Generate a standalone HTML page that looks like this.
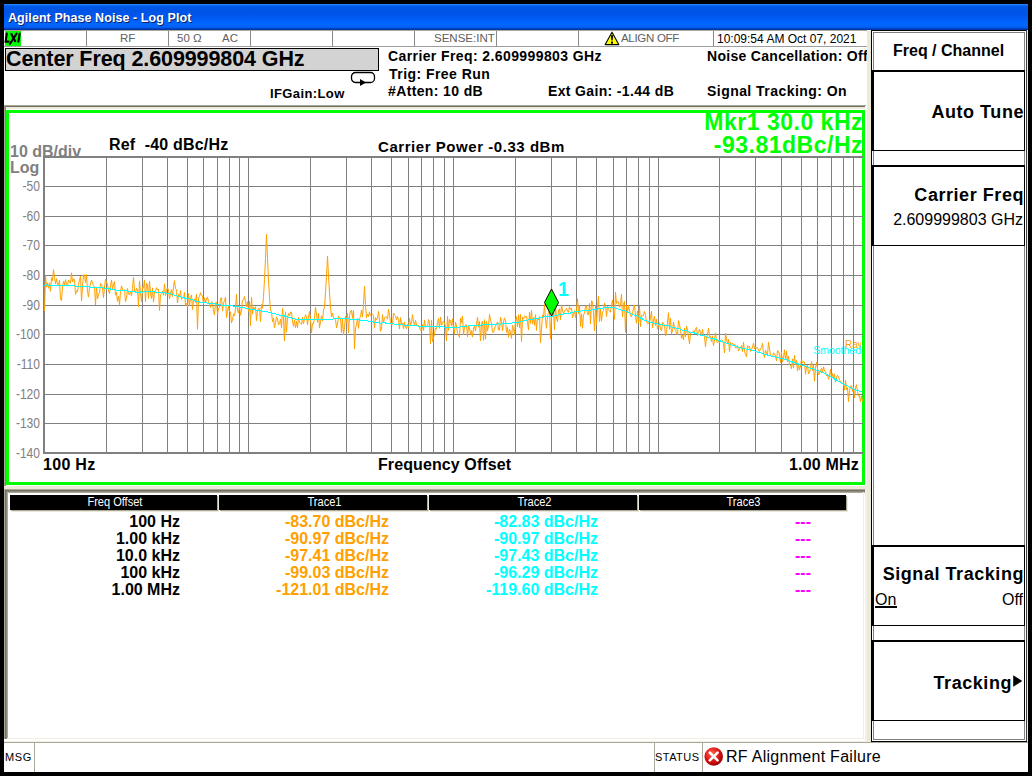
<!DOCTYPE html>
<html><head><meta charset="utf-8">
<style>
*{margin:0;padding:0;box-sizing:border-box}
html,body{width:1032px;height:776px;overflow:hidden;background:#000}
body{position:relative;font-family:"Liberation Sans",sans-serif;color:#000}
.a{position:absolute}
.t{position:absolute;white-space:nowrap;line-height:1}
#title{left:4px;top:4px;width:1024px;height:26px;
 background:linear-gradient(to bottom,#3d95ff 0px,#0a6af5 1px,#0058e6 3px,#0054e3 6px,#0055eb 11px,#005ff7 16px,#0066ff 20px,#0062f5 23px,#0050e0 24px,#003cb0 25px,#003092 26px)}
#title .t{left:4px;top:8px;color:#fff;font-size:12.5px;letter-spacing:0.07px;font-weight:bold;text-shadow:1px 1px 0 #0a1e6e}
#main{left:4px;top:30px;width:1024px;height:742px;background:#fff}
.sep{position:absolute;background:#8a8a8a}
.st{font-size:11.5px;color:#606060}
.bold{font-weight:bold}
.yl{position:absolute;left:9px;width:31px;text-align:right;font-size:14px;color:#808080;line-height:16px;transform:scaleX(0.86);transform-origin:right center}
.hdr span{position:relative;top:0px;left:1px}
.hdr{position:absolute;top:495px;height:15px;background:#000;color:#fff;font-size:12px;line-height:15px;text-align:center;
 box-shadow:1px 1px 0 #aca899, 2px 2px 0 #ece9d8}
.row{position:absolute;font-size:16px;font-weight:bold;line-height:17px;white-space:nowrap;text-align:right}
.key{position:absolute;left:871px;width:154px;height:81px;border-left:3px solid #000;border-top:2px solid #000;border-right:1px solid #000;border-bottom:1px solid #000;background:#fff}
.kt{position:absolute;right:0px;font-size:18px;font-weight:bold;white-space:nowrap;line-height:1;letter-spacing:0.55px}
</style></head><body>
<div id="title" class="a"><div class="t">Agilent Phase Noise - Log Plot</div></div>
<div id="main" class="a"></div>

<!-- status row -->
<div class="a" style="left:4px;top:30px;width:863px;height:1px;background:#aca899"></div>
<div class="a" style="left:4px;top:46px;width:863px;height:1px;background:#9d9d9d"></div>
<div class="a" style="left:5px;top:31px;width:16px;height:15px;background:#00ff00"></div>
<svg class="a" style="left:0;top:28px" width="24" height="20" viewBox="0 28 24 20"><g stroke="#000" stroke-width="2.1" fill="none" stroke-linecap="round"><path d="M6.8 33.6 L5.6 41.6 L8.6 41.6"/><path d="M16.6 33.6 L10 43.8"/><path d="M11.4 34 L15.2 41.2"/><path d="M19.7 33.6 L18.3 41.8"/></g></svg>
<div class="sep" style="left:86px;top:31px;width:1px;height:15px"></div><div class="sep" style="left:168px;top:31px;width:1px;height:15px"></div><div class="sep" style="left:250px;top:31px;width:1px;height:15px"></div><div class="sep" style="left:332px;top:31px;width:1px;height:15px"></div><div class="sep" style="left:414px;top:31px;width:1px;height:15px"></div><div class="sep" style="left:496px;top:31px;width:1px;height:15px"></div><div class="sep" style="left:578px;top:31px;width:1px;height:15px"></div><div class="sep" style="left:713px;top:31px;width:1px;height:15px"></div>
<div class="t st" style="left:120px;top:33px">RF</div>
<div class="t st" style="left:177px;top:33px">50 &#937;</div>
<div class="t st" style="left:222px;top:33px">AC</div>
<div class="t st" style="left:434px;top:33px">SENSE:INT</div>
<div class="t st" style="left:621px;top:33px;letter-spacing:-0.3px">ALIGN OFF</div>
<svg class="a" style="left:604px;top:31px" width="16" height="15" viewBox="0 0 16 15"><path d="M8 1.2 L14.8 13.6 L1.2 13.6 Z" fill="#ffff00" stroke="#000" stroke-width="1.1" stroke-linejoin="round"/><path d="M6.9 4.2 L9.1 4.2 L8.6 9.6 L7.4 9.6 Z" fill="#000"/><rect x="7" y="10.6" width="2" height="2" fill="#000"/></svg>
<div class="t" style="left:717px;top:33px;font-size:12px;color:#000">10:09:54 AM Oct 07, 2021</div>

<!-- beige strip between main and softkeys -->
<div class="a" style="left:867px;top:31px;width:4px;height:711px;background:#ece9d8"></div>

<!-- center freq box -->
<div class="a" style="left:5px;top:48px;width:374px;height:23px;border:1px solid #000;background:#d3d3d3"></div>
<div class="t bold" style="left:6px;top:49px;font-size:21.5px;letter-spacing:-0.1px">Center Freq 2.609999804 GHz</div>
<svg class="a" style="left:350px;top:71px" width="26" height="16" viewBox="0 0 26 16"><rect x="1.5" y="1.5" width="23" height="10" rx="4" ry="4" fill="none" stroke="#000" stroke-width="1.3"/><path d="M10 8 L16 11.5 L10 15 Z" fill="#000"/></svg>
<div class="t bold" style="left:270px;top:87px;font-size:13px;letter-spacing:0.39px">IFGain:Low</div>
<div class="t bold" style="left:388px;top:49px;font-size:14px;letter-spacing:0.4px">Carrier Freq: 2.609999803 GHz</div>
<div class="t bold" style="left:389px;top:67px;font-size:14px;letter-spacing:0.45px">Trig: Free Run</div>
<div class="t bold" style="left:388px;top:84px;font-size:14px;letter-spacing:0.37px">#Atten: 10 dB</div>
<div class="t bold" style="left:548px;top:84px;font-size:14px;letter-spacing:0.35px">Ext Gain: -1.44 dB</div>
<div class="t bold" style="left:707px;top:49px;font-size:14px;width:160px;overflow:hidden;letter-spacing:0.3px">Noise Cancellation: Off</div>
<div class="t bold" style="left:707px;top:84px;font-size:14px;letter-spacing:0.45px">Signal Tracking: On</div>

<!-- plot panel frame -->
<div class="a" style="left:4px;top:105px;width:862px;height:1px;background:#aca899"></div>
<div class="a" style="left:5px;top:106px;width:860px;height:1px;background:#716f64"></div>
<div class="a" style="left:6px;top:107px;width:859px;height:2px;background:#ece9d8"></div>
<div class="a" style="left:4px;top:105px;width:1px;height:384px;background:#aca899"></div>
<div class="a" style="left:5px;top:106px;width:1px;height:383px;background:#8a7f80"></div>
<div class="a" style="left:4px;top:486px;width:863px;height:3px;background:#ece9d8"></div>
<div class="a" style="left:6px;top:110px;width:859px;height:375px;border:3px solid #00ff00"></div>

<div class="t" style="left:10px;top:144px;font-size:16px;font-weight:bold;color:#808080">10 dB/div</div>
<div class="t" style="left:10px;top:160px;font-size:16px;font-weight:bold;color:#808080">Log</div>
<svg class="a" style="left:0;top:0" width="1032" height="776" viewBox="0 0 1032 776" shape-rendering="crispEdges">
<g fill="#808080">
<rect x="106" y="156" width="1" height="298"/>
<rect x="142" y="156" width="1" height="298"/>
<rect x="167" y="156" width="1" height="298"/>
<rect x="187" y="156" width="1" height="298"/>
<rect x="203" y="156" width="1" height="298"/>
<rect x="217" y="156" width="1" height="298"/>
<rect x="229" y="156" width="1" height="298"/>
<rect x="239" y="156" width="1" height="298"/>
<rect x="248" y="156" width="1" height="298"/>
<rect x="310" y="156" width="1" height="298"/>
<rect x="346" y="156" width="1" height="298"/>
<rect x="371" y="156" width="1" height="298"/>
<rect x="391" y="156" width="1" height="298"/>
<rect x="408" y="156" width="1" height="298"/>
<rect x="421" y="156" width="1" height="298"/>
<rect x="433" y="156" width="1" height="298"/>
<rect x="444" y="156" width="1" height="298"/>
<rect x="453" y="156" width="1" height="298"/>
<rect x="515" y="156" width="1" height="298"/>
<rect x="551" y="156" width="1" height="298"/>
<rect x="576" y="156" width="1" height="298"/>
<rect x="596" y="156" width="1" height="298"/>
<rect x="613" y="156" width="1" height="298"/>
<rect x="626" y="156" width="1" height="298"/>
<rect x="638" y="156" width="1" height="298"/>
<rect x="649" y="156" width="1" height="298"/>
<rect x="658" y="156" width="1" height="298"/>
<rect x="719" y="156" width="1" height="298"/>
<rect x="755" y="156" width="1" height="298"/>
<rect x="781" y="156" width="1" height="298"/>
<rect x="801" y="156" width="1" height="298"/>
<rect x="817" y="156" width="1" height="298"/>
<rect x="831" y="156" width="1" height="298"/>
<rect x="843" y="156" width="1" height="298"/>
<rect x="853" y="156" width="1" height="298"/>
<rect x="43" y="186" width="820" height="1"/>
<rect x="43" y="216" width="820" height="1"/>
<rect x="43" y="245" width="820" height="1"/>
<rect x="43" y="275" width="820" height="1"/>
<rect x="43" y="305" width="820" height="1"/>
<rect x="43" y="334" width="820" height="1"/>
<rect x="43" y="364" width="820" height="1"/>
<rect x="43" y="394" width="820" height="1"/>
<rect x="43" y="423" width="820" height="1"/>
<rect x="43" y="156" width="820" height="2"/>
<rect x="43" y="452" width="820" height="2"/>
<rect x="43" y="156" width="2" height="298"/>
</g>
</svg>
<div class="yl" style="top:178px">-50</div>
<div class="yl" style="top:208px">-60</div>
<div class="yl" style="top:237px">-70</div>
<div class="yl" style="top:267px">-80</div>
<div class="yl" style="top:297px">-90</div>
<div class="yl" style="top:326px">-100</div>
<div class="yl" style="top:356px">-110</div>
<div class="yl" style="top:386px">-120</div>
<div class="yl" style="top:415px">-130</div>
<div class="yl" style="top:445px">-140</div>

<svg class="a" style="left:0;top:0" width="1032" height="776" viewBox="0 0 1032 776">
<polyline points="44.5,311.1 45.5,275.6 46.5,287.2 47.5,282.8 48.5,288.3 49.5,282.9 50.5,291.3 51.5,277.7 52.5,280.8 53.5,269.6 54.5,277.3 55.5,284.0 56.5,278.6 57.5,284.1 58.5,285.6 59.5,280.1 60.5,299.6 61.5,300.4 62.5,287.1 63.5,281.4 64.5,284.9 65.5,279.6 66.5,285.1 67.5,286.1 68.5,279.9 69.5,281.7 70.5,283.3 71.5,272.8 72.5,281.8 73.5,278.8 74.5,279.5 75.5,294.4 76.5,290.6 77.5,291.6 78.5,284.3 79.5,279.9 80.5,276.1 81.5,300.8 82.5,287.0 83.5,275.0 84.5,274.7 85.5,282.6 86.5,274.5 87.5,291.1 88.5,297.1 89.5,287.3 90.5,284.4 91.5,280.0 92.5,283.1 93.5,285.6 94.5,286.9 95.5,305.0 96.5,287.1 97.5,298.9 98.5,294.1 99.5,293.0 100.5,283.5 101.5,284.4 102.5,288.0 103.5,297.7 104.5,287.0 105.5,279.2 106.5,282.8 107.5,284.0 108.5,290.8 109.5,293.5 110.5,285.3 111.5,280.1 112.5,289.2 113.5,284.4 114.5,281.6 115.5,295.2 116.5,292.4 117.5,301.2 118.5,296.4 119.5,304.6 120.5,291.6 121.5,285.8 122.5,289.0 123.5,290.7 124.5,289.6 125.5,301.6 126.5,298.3 127.5,288.4 128.5,294.2 129.5,294.6 130.5,291.7 131.5,296.0 132.5,288.4 133.5,277.4 134.5,290.1 135.5,293.0 136.5,288.2 137.5,289.3 138.5,306.8 139.5,280.9 140.5,293.3 141.5,301.8 142.5,287.0 143.5,287.9 144.5,279.9 145.5,301.6 146.5,283.1 147.5,284.8 148.5,298.3 149.5,281.2 150.5,293.1 151.5,298.7 152.5,287.9 153.5,302.1 154.5,291.7 155.5,291.4 156.5,287.7 157.5,290.0 158.5,289.0 159.5,310.5 160.5,294.6 161.5,293.7 162.5,291.2 163.5,295.2 164.5,283.8 165.5,295.6 166.5,290.4 167.5,287.7 168.5,290.1 169.5,298.9 170.5,293.7 171.5,289.6 172.5,296.5 173.5,286.8 174.5,280.6 175.5,288.5 176.5,289.8 177.5,303.0 178.5,294.4 179.5,297.0 180.5,290.6 181.5,299.5 182.5,297.2 183.5,298.2 184.5,292.5 185.5,305.2 186.5,303.5 187.5,307.1 188.5,293.6 189.5,305.4 190.5,298.8 191.5,294.9 192.5,309.6 193.5,299.7 194.5,298.9 195.5,302.4 196.5,294.2 197.5,329.2 198.5,298.1 199.5,296.3 200.5,292.7 201.5,295.3 202.5,295.8 203.5,304.1 204.5,297.8 205.5,302.3 206.5,298.8 207.5,296.9 208.5,302.1 209.5,304.4 210.5,307.5 211.5,301.6 212.5,302.5 213.5,311.1 214.5,315.1 215.5,302.7 216.5,302.3 217.5,314.2 218.5,308.7 219.5,307.6 220.5,299.1 221.5,297.6 222.5,311.1 223.5,303.2 224.5,300.7 225.5,297.2 226.5,317.6 227.5,311.6 228.5,306.2 229.5,311.6 230.5,311.9 231.5,322.9 232.5,319.8 233.5,313.9 234.5,315.9 235.5,309.4 236.5,294.1 237.5,310.9 238.5,313.1 239.5,306.1 240.5,315.3 241.5,310.6 242.5,300.3 243.5,300.1 244.5,296.5 245.5,301.5 246.5,306.5 247.5,301.6 248.5,311.4 249.5,301.4 250.5,325.9 251.5,297.0 252.5,314.2 253.5,307.2 254.5,309.0 255.5,306.7 256.5,320.7 257.5,310.6 258.5,308.5 259.5,308.5 260.5,321.6 261.5,304.3 262.5,308.3 263.5,296.5 264.5,279.5 265.5,258.5 266.5,234.0 266.5,234.0 267.5,258.6 268.5,280.0 269.5,297.6 270.5,310.1 271.5,311.9 272.5,321.9 273.5,318.2 274.5,327.7 275.5,322.7 276.5,316.8 277.5,318.9 278.5,324.9 279.5,323.7 280.5,319.1 281.5,327.8 282.5,308.4 283.5,319.1 284.5,340.9 285.5,311.8 286.5,332.2 287.5,318.1 288.5,313.6 289.5,315.9 290.5,312.0 291.5,312.2 292.5,321.3 293.5,326.3 294.5,319.9 295.5,327.7 296.5,321.3 297.5,327.7 298.5,317.5 299.5,322.4 300.5,323.4 301.5,324.5 302.5,317.2 303.5,323.8 304.5,318.9 305.5,314.7 306.5,316.7 307.5,324.5 308.5,317.1 309.5,311.6 310.5,319.8 311.5,332.9 312.5,323.4 313.5,323.4 314.5,318.2 315.5,307.4 316.5,314.0 317.5,322.3 318.5,313.2 319.5,327.9 320.5,321.8 321.5,315.9 322.5,321.1 323.5,310.0 324.5,307.1 325.5,293.0 326.5,275.8 327.5,256.0 327.5,256.0 328.5,275.8 329.5,293.0 330.5,307.0 331.5,316.7 332.5,313.0 333.5,317.8 334.5,319.0 335.5,319.3 336.5,327.9 337.5,324.1 338.5,316.2 339.5,317.2 340.5,318.3 341.5,332.5 342.5,318.2 343.5,334.9 344.5,327.7 345.5,316.0 346.5,322.3 347.5,312.9 348.5,332.9 349.5,315.5 350.5,311.0 351.5,310.2 352.5,318.3 353.5,310.5 354.5,348.8 355.5,327.9 356.5,324.9 357.5,318.2 358.5,328.5 359.5,318.6 360.5,316.4 361.5,310.0 362.5,317.1 363.5,304.4 364.5,286.0 364.5,286.0 365.5,304.5 366.5,317.6 367.5,314.0 368.5,316.5 369.5,311.9 370.5,315.7 371.5,314.7 372.5,313.9 373.5,315.5 374.5,327.9 375.5,317.7 376.5,319.9 377.5,317.9 378.5,311.3 379.5,320.1 380.5,331.3 381.5,328.8 382.5,314.6 383.5,322.9 384.5,317.4 385.5,316.6 386.5,316.9 387.5,319.2 388.5,309.3 389.5,315.4 390.5,321.7 391.5,325.0 392.5,324.7 393.5,313.0 394.5,315.0 395.5,315.9 396.5,319.6 397.5,316.5 398.5,319.8 399.5,329.1 400.5,317.6 401.5,323.7 402.5,323.1 403.5,328.9 404.5,321.9 405.5,327.4 406.5,328.8 407.5,324.1 408.5,327.9 409.5,318.5 410.5,325.3 411.5,322.6 412.5,314.7 413.5,321.7 414.5,325.7 415.5,320.5 416.5,325.0 417.5,325.8 418.5,325.4 419.5,326.8 420.5,330.6 421.5,330.7 422.5,324.5 423.5,330.5 424.5,320.0 425.5,327.0 426.5,326.1 427.5,327.1 428.5,319.5 429.5,322.6 430.5,343.8 431.5,320.2 432.5,341.5 433.5,337.8 434.5,333.9 435.5,327.8 436.5,329.2 437.5,322.4 438.5,318.5 439.5,328.3 440.5,316.9 441.5,325.1 442.5,323.7 443.5,320.9 444.5,322.2 445.5,327.1 446.5,340.7 447.5,316.4 448.5,330.4 449.5,319.5 450.5,320.9 451.5,326.1 452.5,318.8 453.5,327.8 454.5,333.8 455.5,322.0 456.5,326.0 457.5,333.6 458.5,334.9 459.5,337.4 460.5,317.9 461.5,322.6 462.5,316.1 463.5,334.9 464.5,327.1 465.5,324.7 466.5,325.0 467.5,336.9 468.5,326.3 469.5,327.8 470.5,334.5 471.5,330.6 472.5,337.1 473.5,328.0 474.5,326.2 475.5,331.1 476.5,324.3 477.5,317.3 478.5,327.3 479.5,321.4 480.5,341.0 481.5,324.8 482.5,321.0 483.5,340.3 484.5,319.6 485.5,339.3 486.5,321.3 487.5,330.9 488.5,326.2 489.5,314.5 490.5,320.3 491.5,323.3 492.5,332.0 493.5,332.6 494.5,329.1 495.5,325.7 496.5,324.2 497.5,321.9 498.5,330.0 499.5,330.0 500.5,317.1 501.5,321.2 502.5,330.9 503.5,322.1 504.5,317.8 505.5,320.8 506.5,332.3 507.5,327.4 508.5,337.3 509.5,329.3 510.5,332.8 511.5,338.4 512.5,325.3 513.5,328.9 514.5,334.7 515.5,320.7 516.5,316.6 517.5,326.9 518.5,314.6 519.5,327.6 520.5,314.0 521.5,341.6 522.5,317.3 523.5,319.1 524.5,315.8 525.5,317.4 526.5,316.2 527.5,322.2 528.5,329.8 529.5,312.3 530.5,323.3 531.5,310.4 532.5,324.2 533.5,317.5 534.5,325.5 535.5,314.7 536.5,330.4 537.5,318.4 538.5,319.8 539.5,316.6 540.5,342.7 541.5,329.2 542.5,314.8 543.5,317.4 544.5,304.5 545.5,319.1 546.5,328.3 547.5,316.1 548.5,312.5 549.5,311.1 550.5,339.1 551.5,316.0 552.5,316.7 553.5,310.6 554.5,329.6 555.5,306.4 556.5,318.2 557.5,321.7 558.5,310.9 559.5,308.8 560.5,319.8 561.5,304.9 562.5,309.9 563.5,313.6 564.5,310.8 565.5,310.5 566.5,308.4 567.5,311.0 568.5,312.4 569.5,306.6 570.5,309.4 571.5,308.1 572.5,317.8 573.5,314.6 574.5,310.6 575.5,317.7 576.5,309.7 577.5,298.7 578.5,313.5 579.5,305.5 580.5,326.5 581.5,313.8 582.5,328.3 583.5,314.3 584.5,313.7 585.5,305.8 586.5,305.8 587.5,314.5 588.5,314.7 589.5,303.5 590.5,324.0 591.5,300.9 592.5,301.7 593.5,313.5 594.5,330.9 595.5,305.4 596.5,324.8 597.5,307.4 598.5,296.2 599.5,321.6 600.5,309.2 601.5,321.2 602.5,312.0 603.5,310.6 604.5,303.1 605.5,305.4 606.5,316.4 607.5,306.2 608.5,309.2 609.5,310.8 610.5,312.2 611.5,305.1 612.5,300.1 613.5,312.0 614.5,319.2 615.5,292.3 616.5,303.5 617.5,301.6 618.5,302.1 619.5,307.3 620.5,305.1 621.5,294.0 622.5,317.0 623.5,304.5 624.5,301.3 625.5,332.3 626.5,305.2 627.5,312.1 628.5,305.4 629.5,310.8 630.5,316.1 631.5,316.5 632.5,312.7 633.5,308.7 634.5,304.9 635.5,315.8 636.5,323.3 637.5,310.9 638.5,323.0 639.5,306.0 640.5,326.6 641.5,315.3 642.5,315.7 643.5,315.6 644.5,311.4 645.5,315.2 646.5,321.8 647.5,323.8 648.5,323.5 649.5,321.4 650.5,318.4 651.5,311.3 652.5,327.9 653.5,320.3 654.5,316.2 655.5,325.5 656.5,319.2 657.5,329.2 658.5,325.5 659.5,322.8 660.5,329.4 661.5,330.6 662.5,322.3 663.5,324.0 664.5,324.6 665.5,336.1 666.5,332.3 667.5,322.1 668.5,312.7 669.5,329.3 670.5,318.0 671.5,333.7 672.5,330.9 673.5,322.0 674.5,328.9 675.5,328.7 676.5,333.7 677.5,334.6 678.5,320.6 679.5,324.6 680.5,329.6 681.5,338.2 682.5,335.1 683.5,339.9 684.5,328.2 685.5,336.7 686.5,326.2 687.5,330.0 688.5,337.1 689.5,343.8 690.5,333.2 691.5,331.9 692.5,332.9 693.5,330.7 694.5,332.3 695.5,329.2 696.5,327.2 697.5,335.8 698.5,331.6 699.5,329.3 700.5,332.6 701.5,335.1 702.5,329.4 703.5,335.7 704.5,336.5 705.5,346.8 706.5,337.1 707.5,334.7 708.5,328.1 709.5,336.6 710.5,336.2 711.5,341.5 712.5,335.9 713.5,345.8 714.5,339.7 715.5,332.8 716.5,341.5 717.5,342.9 718.5,341.4 719.5,342.7 720.5,340.4 721.5,339.4 722.5,340.3 723.5,343.8 724.5,352.9 725.5,333.3 726.5,339.0 727.5,343.2 728.5,339.4 729.5,351.5 730.5,342.3 731.5,345.2 732.5,343.2 733.5,344.5 734.5,344.2 735.5,347.9 736.5,347.7 737.5,345.4 738.5,351.1 739.5,349.0 740.5,347.6 741.5,345.6 742.5,351.6 743.5,342.1 744.5,351.3 745.5,354.5 746.5,356.9 747.5,345.7 748.5,347.4 749.5,346.3 750.5,351.4 751.5,349.8 752.5,346.9 753.5,343.3 754.5,349.0 755.5,347.0 756.5,348.1 757.5,347.6 758.5,350.1 759.5,351.5 760.5,348.4 761.5,347.5 762.5,343.2 763.5,353.5 764.5,357.5 765.5,350.1 766.5,352.7 767.5,355.1 768.5,342.2 769.5,349.2 770.5,355.3 771.5,356.1 772.5,356.7 773.5,352.9 774.5,353.7 775.5,356.1 776.5,361.0 777.5,350.5 778.5,351.4 779.5,355.0 780.5,362.5 781.5,352.1 782.5,362.1 783.5,358.1 784.5,349.7 785.5,359.6 786.5,351.1 787.5,361.9 788.5,356.2 789.5,364.6 790.5,365.3 791.5,368.7 792.5,358.9 793.5,368.1 794.5,355.3 795.5,364.5 796.5,360.5 797.5,371.1 798.5,363.5 799.5,369.9 800.5,366.0 801.5,359.3 802.5,362.9 803.5,361.7 804.5,362.0 805.5,374.2 806.5,366.4 807.5,365.0 808.5,374.0 809.5,372.5 810.5,367.7 811.5,361.6 812.5,370.5 813.5,365.3 814.5,381.3 815.5,368.2 816.5,362.0 817.5,367.9 818.5,374.9 819.5,373.7 820.5,369.9 821.5,368.2 822.5,371.9 823.5,366.8 824.5,371.1 825.5,371.3 826.5,376.0 827.5,374.2 828.5,379.2 829.5,375.4 830.5,369.0 831.5,378.5 832.5,373.5 833.5,378.2 834.5,373.8 835.5,382.0 836.5,377.2 837.5,375.4 838.5,376.7 839.5,380.0 840.5,381.1 841.5,382.8 842.5,383.8 843.5,382.6 844.5,390.2 845.5,380.2 846.5,389.7 847.5,387.7 848.5,401.5 849.5,390.5 850.5,385.9 851.5,385.8 852.5,391.4 853.5,387.1 854.5,398.0 855.5,387.9 856.5,384.7 857.5,391.3 858.5,396.1 859.5,395.7 860.5,401.8 861.5,395.9 862.5,401.3" fill="none" stroke="#ffa000" stroke-width="1"/>
<polyline points="44,285.0 45,285.0 46,285.1 47,284.9 48,285.1 49,285.1 50,285.2 51,285.2 52,285.1 53,285.1 54,285.3 55,285.3 56,285.4 57,285.5 58,285.5 59,285.3 60,285.6 61,285.4 62,285.3 63,285.2 64,285.2 65,285.2 66,285.1 67,285.1 68,285.2 69,285.3 70,285.2 71,285.3 72,285.6 73,285.6 74,285.8 75,286.1 76,286.2 77,286.2 78,286.4 79,286.6 80,286.8 81,286.6 82,286.6 83,286.7 84,286.5 85,286.5 86,286.7 87,286.6 88,286.7 89,286.8 90,287.0 91,287.1 92,287.2 93,287.0 94,287.3 95,287.5 96,287.5 97,287.7 98,287.8 99,287.9 100,288.0 101,287.9 102,288.0 103,287.9 104,288.1 105,288.1 106,288.3 107,288.3 108,288.5 109,288.8 110,288.9 111,289.1 112,289.2 113,289.6 114,289.5 115,289.7 116,290.0 117,290.0 118,290.1 119,290.3 120,290.3 121,290.4 122,290.6 123,290.6 124,290.6 125,290.5 126,290.5 127,290.9 128,291.1 129,291.0 130,291.1 131,291.4 132,291.5 133,291.8 134,291.8 135,291.7 136,292.0 137,292.0 138,292.1 139,292.2 140,292.1 141,291.9 142,292.1 143,292.0 144,291.9 145,291.9 146,291.8 147,291.7 148,291.8 149,291.8 150,291.9 151,292.0 152,291.9 153,291.7 154,291.8 155,292.0 156,292.1 157,292.1 158,292.1 159,292.1 160,292.3 161,292.2 162,292.3 163,292.3 164,292.5 165,292.8 166,293.1 167,293.2 168,293.0 169,293.2 170,293.6 171,293.7 172,294.2 173,294.5 174,295.0 175,295.4 176,295.7 177,296.0 178,296.2 179,296.4 180,296.6 181,297.0 182,297.4 183,297.6 184,297.9 185,298.1 186,298.1 187,298.3 188,298.4 189,298.7 190,299.0 191,299.2 192,299.4 193,299.9 194,300.3 195,300.7 196,301.1 197,301.2 198,301.4 199,301.9 200,302.1 201,302.4 202,302.5 203,302.6 204,302.7 205,303.0 206,302.9 207,303.0 208,303.0 209,303.0 210,303.4 211,303.5 212,303.7 213,303.8 214,303.9 215,304.0 216,304.1 217,304.4 218,304.6 219,304.8 220,304.8 221,305.1 222,305.1 223,305.1 224,305.2 225,305.2 226,305.3 227,305.5 228,305.5 229,305.6 230,305.8 231,305.9 232,305.9 233,306.1 234,306.0 235,306.4 236,306.4 237,306.6 238,306.8 239,306.8 240,307.0 241,307.3 242,307.6 243,307.6 244,307.9 245,308.1 246,308.3 247,308.6 248,308.7 249,308.9 250,309.1 251,309.2 252,309.4 253,309.6 254,309.8 255,310.1 256,310.2 257,310.4 258,310.5 259,310.7 260,310.9 261,310.8 262,311.2 263,311.2 264,311.4 265,311.6 266,311.7 267,311.6 268,311.9 269,312.3 270,312.4 271,312.8 272,313.0 273,313.1 274,313.5 275,313.8 276,314.0 277,314.4 278,314.8 279,315.1 280,315.2 281,315.4 282,315.4 283,315.6 284,315.8 285,316.2 286,316.6 287,316.9 288,317.1 289,317.4 290,317.7 291,317.8 292,318.2 293,318.7 294,318.9 295,319.0 296,319.3 297,319.4 298,319.4 299,319.5 300,319.7 301,319.6 302,319.7 303,319.7 304,319.7 305,319.8 306,319.7 307,319.5 308,319.7 309,319.6 310,319.3 311,319.2 312,319.3 313,319.2 314,319.3 315,319.2 316,319.2 317,319.3 318,319.3 319,319.2 320,319.4 321,319.3 322,319.2 323,319.3 324,319.5 325,319.5 326,319.4 327,319.4 328,319.3 329,319.3 330,319.2 331,319.1 332,319.0 333,319.0 334,318.9 335,318.8 336,318.9 337,318.7 338,318.6 339,318.5 340,318.5 341,318.9 342,318.8 343,318.9 344,318.8 345,319.0 346,318.8 347,318.7 348,318.9 349,319.0 350,319.2 351,319.2 352,319.4 353,319.7 354,319.4 355,319.5 356,319.5 357,319.6 358,319.8 359,320.1 360,320.2 361,320.3 362,320.7 363,320.7 364,320.7 365,320.8 366,320.5 367,320.8 368,321.0 369,321.3 370,321.5 371,321.6 372,321.7 373,321.9 374,322.1 375,322.1 376,322.1 377,322.5 378,322.7 379,322.9 380,323.0 381,323.1 382,323.0 383,322.9 384,322.7 385,322.9 386,323.1 387,323.2 388,323.3 389,323.4 390,323.6 391,323.3 392,323.4 393,323.6 394,323.9 395,324.2 396,324.5 397,324.7 398,324.5 399,324.6 400,324.7 401,324.8 402,324.8 403,324.9 404,325.1 405,325.2 406,325.2 407,325.1 408,325.1 409,325.0 410,325.2 411,325.4 412,325.5 413,325.6 414,325.5 415,325.5 416,325.7 417,325.9 418,326.0 419,326.1 420,326.0 421,326.0 422,326.0 423,326.1 424,326.2 425,326.1 426,326.0 427,326.1 428,326.3 429,326.0 430,326.1 431,326.0 432,326.1 433,326.1 434,326.3 435,326.4 436,326.5 437,326.5 438,326.7 439,326.8 440,326.9 441,326.8 442,326.9 443,326.9 444,327.0 445,327.1 446,327.2 447,327.1 448,327.1 449,327.2 450,327.3 451,327.3 452,327.4 453,327.3 454,327.3 455,327.4 456,327.4 457,327.3 458,327.2 459,327.0 460,327.0 461,326.7 462,326.5 463,326.3 464,326.2 465,326.0 466,326.0 467,326.2 468,325.9 469,325.9 470,325.9 471,325.8 472,325.8 473,325.6 474,325.8 475,325.9 476,325.7 477,325.6 478,325.5 479,325.3 480,325.1 481,325.0 482,324.8 483,324.8 484,324.8 485,324.9 486,324.9 487,324.6 488,324.5 489,324.5 490,324.4 491,324.6 492,324.7 493,324.5 494,324.6 495,324.6 496,324.3 497,324.2 498,323.9 499,324.0 500,324.1 501,324.0 502,323.9 503,323.6 504,323.5 505,323.4 506,323.3 507,323.2 508,323.2 509,323.1 510,323.1 511,323.2 512,322.9 513,322.7 514,322.6 515,322.4 516,322.5 517,322.4 518,322.0 519,322.0 520,321.7 521,321.3 522,321.3 523,321.0 524,320.7 525,320.4 526,320.3 527,320.0 528,320.0 529,319.8 530,319.4 531,319.5 532,319.2 533,319.0 534,318.9 535,318.9 536,318.8 537,318.6 538,318.5 539,318.1 540,317.9 541,317.6 542,317.5 543,317.4 544,317.1 545,316.9 546,316.9 547,316.8 548,316.6 549,316.4 550,316.2 551,316.1 552,316.0 553,316.0 554,315.8 555,315.7 556,315.4 557,315.3 558,315.0 559,314.8 560,314.7 561,314.6 562,314.5 563,314.2 564,313.9 565,313.8 566,313.4 567,313.5 568,313.2 569,313.2 570,313.1 571,312.9 572,312.6 573,312.3 574,312.1 575,311.9 576,311.9 577,311.9 578,311.7 579,311.6 580,311.3 581,311.1 582,310.9 583,310.7 584,310.8 585,310.8 586,310.7 587,310.5 588,310.4 589,310.2 590,310.0 591,310.1 592,309.9 593,309.7 594,309.7 595,309.6 596,309.4 597,309.2 598,309.0 599,308.7 600,308.6 601,308.4 602,308.2 603,308.0 604,307.6 605,307.5 606,307.5 607,307.3 608,307.3 609,307.4 610,307.4 611,307.5 612,307.7 613,307.8 614,307.9 615,308.0 616,308.4 617,308.6 618,309.1 619,309.4 620,309.6 621,309.9 622,310.2 623,310.5 624,310.8 625,311.0 626,311.5 627,311.8 628,312.4 629,312.6 630,312.9 631,313.3 632,313.9 633,314.5 634,314.9 635,315.2 636,315.7 637,316.1 638,316.8 639,317.1 640,317.8 641,318.2 642,318.6 643,319.4 644,320.0 645,320.0 646,320.6 647,320.9 648,321.2 649,321.7 650,322.0 651,322.2 652,322.7 653,323.1 654,323.4 655,323.7 656,323.6 657,323.8 658,324.1 659,324.2 660,324.4 661,324.6 662,324.6 663,325.0 664,325.1 665,325.2 666,325.3 667,325.5 668,325.8 669,326.1 670,326.3 671,326.6 672,326.9 673,327.2 674,327.5 675,327.9 676,328.0 677,328.4 678,328.6 679,328.9 680,329.1 681,329.8 682,330.0 683,330.3 684,330.7 685,330.8 686,330.9 687,331.1 688,331.4 689,331.9 690,332.2 691,332.7 692,332.9 693,333.0 694,332.8 695,333.3 696,333.6 697,333.6 698,334.2 699,334.5 700,335.0 701,335.5 702,335.5 703,335.6 704,335.9 705,336.1 706,336.7 707,337.1 708,337.4 709,337.7 710,338.1 711,338.2 712,338.7 713,338.7 714,338.8 715,339.2 716,339.7 717,339.8 718,340.3 719,340.5 720,340.8 721,341.2 722,341.6 723,342.0 724,342.3 725,342.6 726,343.0 727,343.3 728,343.8 729,344.0 730,344.5 731,344.6 732,344.9 733,345.4 734,345.7 735,345.8 736,346.1 737,346.7 738,347.0 739,347.3 740,347.8 741,348.0 742,348.1 743,348.4 744,348.6 745,348.9 746,349.1 747,349.3 748,349.5 749,349.7 750,349.7 751,350.1 752,350.3 753,350.3 754,350.8 755,351.1 756,351.4 757,351.9 758,352.2 759,352.3 760,352.7 761,353.1 762,353.5 763,353.8 764,354.1 765,354.6 766,354.8 767,355.0 768,355.4 769,355.4 770,355.6 771,356.1 772,356.6 773,356.6 774,356.9 775,357.1 776,357.3 777,357.5 778,357.5 779,358.0 780,358.1 781,358.3 782,358.6 783,358.9 784,359.1 785,359.4 786,359.8 787,360.0 788,360.3 789,360.7 790,361.1 791,361.6 792,361.8 793,362.2 794,362.5 795,362.8 796,363.3 797,363.5 798,363.7 799,364.2 800,364.6 801,365.0 802,365.2 803,365.4 804,365.7 805,366.1 806,366.4 807,366.8 808,367.2 809,367.4 810,367.9 811,368.3 812,368.6 813,368.9 814,369.2 815,369.4 816,369.9 817,370.2 818,370.4 819,370.9 820,371.2 821,371.5 822,372.3 823,372.6 824,373.0 825,373.5 826,374.2 827,374.7 828,375.2 829,375.7 830,376.5 831,377.1 832,377.5 833,378.1 834,378.9 835,379.1 836,379.7 837,380.2 838,380.8 839,381.4 840,382.1 841,382.8 842,383.5 843,383.7 844,384.3 845,384.8 846,385.2 847,385.6 848,386.2 849,386.8 850,387.5 851,387.9 852,388.1 853,388.5 854,389.0 855,389.5 856,390.0 857,390.2 858,390.6 859,391.0 860,391.3 861,391.6 862,391.7" fill="none" stroke="#00ffff" stroke-width="1" shape-rendering="crispEdges"/>
<path d="M551.5 289 L558.5 302.5 L551.5 316 L544.5 302.5 Z" fill="#00ff00" stroke="#000" stroke-width="1"/>
</svg>
<div class="t bold" style="left:558px;top:280px;font-size:19.5px;color:#00ffff">1</div>
<div class="a" style="left:780px;top:336px;width:81px;height:22px;overflow:hidden">
 <div class="t" style="right:-4px;top:4px;font-size:10px;color:#ffa000">Raw</div>
 <div class="t" style="right:0px;top:9px;font-size:10.5px;color:#00ffff">Smoothed</div>
</div>

<div class="t bold" style="left:109px;top:137px;font-size:16px;letter-spacing:0.2px">Ref&nbsp; -40 dBc/Hz</div>
<div class="t bold" style="left:378px;top:139px;font-size:15px;letter-spacing:0.55px">Carrier Power -0.33 dBm</div>
<div class="t bold" style="right:169px;top:111px;font-size:23px;color:#00ff00;letter-spacing:0.5px">Mkr1 30.0 kHz</div>
<div class="t bold" style="right:169px;top:134px;font-size:23px;color:#00ff00;letter-spacing:0.5px">-93.81dBc/Hz</div>
<div class="t bold" style="left:43px;top:457px;font-size:16px;letter-spacing:0.3px">100 Hz</div>
<div class="t bold" style="left:378px;top:457px;font-size:16px;letter-spacing:0.1px">Frequency Offset</div>
<div class="t bold" style="right:173px;top:457px;font-size:16px;letter-spacing:0.2px">1.00 MHz</div>

<!-- table panel -->
<div class="a" style="left:4px;top:489px;width:862px;height:1px;background:#aca899"></div>
<div class="a" style="left:5px;top:490px;width:861px;height:1px;background:#716f64"></div>
<div class="a" style="left:6px;top:491px;width:860px;height:1px;background:#8f8c7e"></div>
<div class="a" style="left:7px;top:492px;width:859px;height:1px;background:#aca899"></div>
<div class="a" style="left:4px;top:489px;width:1px;height:250px;background:#aca899"></div>
<div class="a" style="left:5px;top:490px;width:1px;height:249px;background:#716f64"></div>
<div class="a" style="left:6px;top:491px;width:1px;height:248px;background:#8f8c7e"></div>
<div class="a" style="left:7px;top:492px;width:1px;height:247px;background:#aca899"></div>
<div class="a" style="left:863px;top:492px;width:1px;height:247px;background:#f1efe2"></div><div class="a" style="left:865px;top:489px;width:2px;height:253px;background:#f3f1e6"></div>
<div class="a" style="left:7px;top:738px;width:857px;height:1px;background:#f1efe2"></div><div class="a" style="left:4px;top:741px;width:863px;height:1px;background:#f1efe2"></div>
<div class="hdr" style="left:10px;width:207px"><span style="display:inline-block;transform:scaleX(0.92)">Freq Offset</span></div>
<div class="hdr" style="left:219px;width:208px"><span style="display:inline-block;transform:scaleX(0.92)">Trace1</span></div>
<div class="hdr" style="left:429px;width:208px"><span style="display:inline-block;transform:scaleX(0.92)">Trace2</span></div>
<div class="hdr" style="left:639px;width:207px"><span style="display:inline-block;transform:scaleX(0.92)">Trace3</span></div>
<div class="row" style="right:852px;top:513px">100 Hz</div><div class="row" style="right:643px;top:513px;color:#ffa000">-83.70 dBc/Hz</div><div class="row" style="right:434px;top:513px;color:#00ffff">-82.83 dBc/Hz</div><div class="row" style="right:221px;top:513px;color:#ff00ff">---</div>
<div class="row" style="right:852px;top:530px">1.00 kHz</div><div class="row" style="right:643px;top:530px;color:#ffa000">-90.97 dBc/Hz</div><div class="row" style="right:434px;top:530px;color:#00ffff">-90.97 dBc/Hz</div><div class="row" style="right:221px;top:530px;color:#ff00ff">---</div>
<div class="row" style="right:852px;top:547px">10.0 kHz</div><div class="row" style="right:643px;top:547px;color:#ffa000">-97.41 dBc/Hz</div><div class="row" style="right:434px;top:547px;color:#00ffff">-97.43 dBc/Hz</div><div class="row" style="right:221px;top:547px;color:#ff00ff">---</div>
<div class="row" style="right:852px;top:564px">100 kHz</div><div class="row" style="right:643px;top:564px;color:#ffa000">-99.03 dBc/Hz</div><div class="row" style="right:434px;top:564px;color:#00ffff">-96.29 dBc/Hz</div><div class="row" style="right:221px;top:564px;color:#ff00ff">---</div>
<div class="row" style="right:852px;top:581px">1.00 MHz</div><div class="row" style="right:643px;top:581px;color:#ffa000">-121.01 dBc/Hz</div><div class="row" style="right:434px;top:581px;color:#00ffff">-119.60 dBc/Hz</div><div class="row" style="right:221px;top:581px;color:#ff00ff">---</div>


<!-- softkey panel -->
<div class="a" style="left:871px;top:30px;width:157px;height:712px;background:#fff"></div>
<div class="a" style="left:871px;top:30px;width:156px;height:1px;background:#000"></div>
<div class="a" style="left:871px;top:30px;width:1px;height:712px;background:#000"></div>
<div class="a" style="left:873px;top:32px;width:152px;height:708px;border:1px solid #808080"></div>
<div class="a" style="left:1026px;top:30px;width:1px;height:712px;background:#404040"></div>
<div class="a" style="left:871px;top:741px;width:156px;height:1px;background:#000"></div>
<div class="a" style="left:1027px;top:30px;width:1px;height:712px;background:#ece9d8"></div>
<div class="t" style="left:893px;top:43px;font-size:16px;font-weight:bold">Freq / Channel</div>
<div class="key" style="top:70px"><div class="kt" style="top:31px">Auto Tune</div></div>
<div class="key" style="top:165px"><div class="kt" style="top:19px">Carrier Freq</div><div class="t" style="right:1px;top:45px;font-size:16px">2.609999803 GHz</div></div>
<div class="key" style="top:545px"><div class="kt" style="top:18px">Signal Tracking</div><div class="t" style="left:1px;top:45px;font-size:16px">On</div><div class="a" style="left:1px;top:59px;width:22px;height:2px;background:#000"></div><div class="t" style="right:1px;top:45px;font-size:16px">Off</div></div>
<div class="key" style="top:640px"><div class="kt" style="top:32px;right:12px">Tracking</div><svg class="a" style="left:139px;top:33px" width="10" height="13" viewBox="0 0 10 13"><path d="M0.2 0.3 L9.3 6 L0.2 11.7 Z" fill="#000"/></svg></div>

<!-- bottom status bar -->
<div class="a" style="left:4px;top:742px;width:1024px;height:1px;background:#aca899"></div>
<div class="a" style="left:34px;top:743px;width:1px;height:29px;background:#aca899"></div>
<div class="a" style="left:654px;top:743px;width:1px;height:29px;background:#aca899"></div>
<div class="a" style="left:702px;top:743px;width:1px;height:29px;background:#aca899"></div>
<div class="t" style="left:5px;top:752px;font-size:11px;letter-spacing:0.6px">MSG</div>
<div class="t" style="left:655px;top:752px;font-size:11px;letter-spacing:0.45px">STATUS</div>
<svg class="a" style="left:704px;top:747px" width="20" height="20" viewBox="0 0 20 20"><defs><radialGradient id="rg" cx="0.4" cy="0.35" r="0.7"><stop offset="0" stop-color="#ff6a5a"/><stop offset="0.6" stop-color="#d81010"/><stop offset="1" stop-color="#900000"/></radialGradient></defs><circle cx="9.7" cy="9.5" r="9.3" fill="url(#rg)"/><path d="M5.8 5.6 L13.6 13.4 M13.6 5.6 L5.8 13.4" stroke="#fff" stroke-width="2.6" stroke-linecap="round"/></svg>
<div class="t" style="left:726px;top:749px;font-size:16px;letter-spacing:0.28px">RF Alignment Failure</div>
</body></html>
